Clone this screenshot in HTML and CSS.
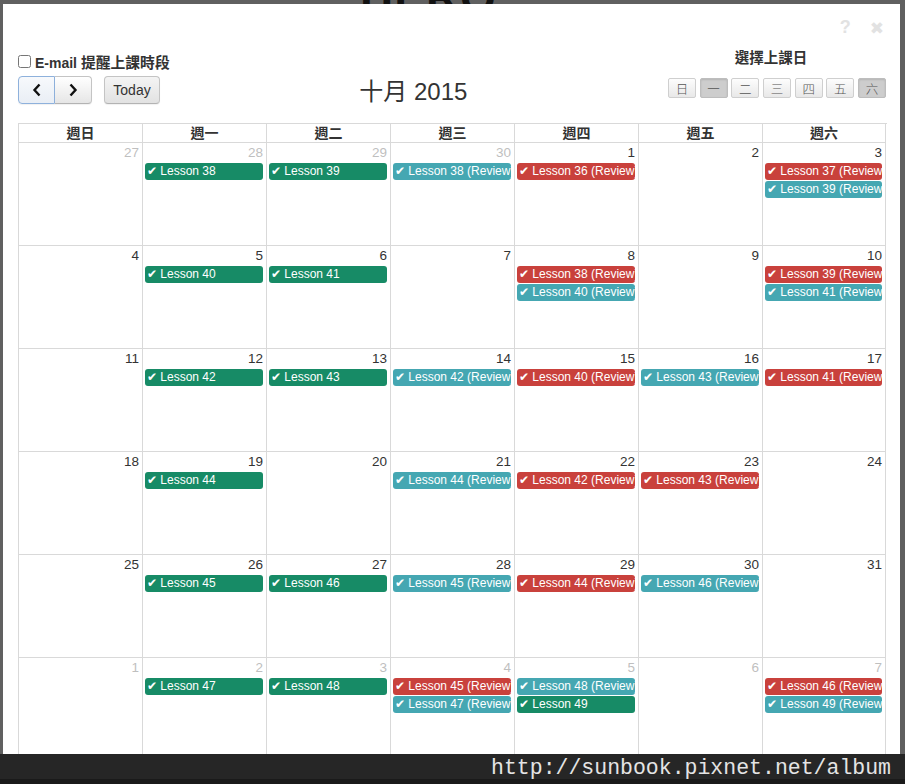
FILE: index.html
```html
<!DOCTYPE html>
<html lang="zh-Hant">
<head>
<meta charset="utf-8">
<title>選擇上課日</title>
<link rel="stylesheet" href="styles.css">
</head>
<body>
<div class="behind">HERO</div>
<div class="modal">
  <div class="modal-top">
    <span class="help">?</span>
    <span class="close">✖</span>
  </div>
  <div class="toolbar">
    <div class="tb-left">
      <label class="remind"><input type="checkbox" class="chk"><span>E-mail <span class="cjk">提醒上課時段</span></span></label>
      <div class="tb-buttons">
        <div class="btn-group">
          <button class="btn nav focus"><svg width="10" height="14" viewBox="0 0 10 14"><polyline points="7.5,1.5 2.5,7 7.5,12.5" fill="none" stroke="#111" stroke-width="2.4"/></svg></button>
          <button class="btn nav"><svg width="10" height="14" viewBox="0 0 10 14"><polyline points="2.5,1.5 7.5,7 2.5,12.5" fill="none" stroke="#111" stroke-width="2.4"/></svg></button>
        </div>
        <button class="btn today">Today</button>
      </div>
    </div>
    <div class="tb-title">十月 2015</div>
    <div class="tb-right">
      <div class="pick-label">選擇上課日</div>
      <div class="day-btns">
        <button class="dbtn">日</button>
        <button class="dbtn on">一</button>
        <button class="dbtn">二</button>
        <button class="dbtn">三</button>
        <button class="dbtn">四</button>
        <button class="dbtn">五</button>
        <button class="dbtn on">六</button>
      </div>
    </div>
  </div>

  <div class="cal">
    <div class="hd">週日</div><div class="hd">週一</div><div class="hd">週二</div><div class="hd">週三</div><div class="hd">週四</div><div class="hd">週五</div><div class="hd">週六</div>

    <div class="day other"><div class="num">27</div></div>
    <div class="day other"><div class="num">28</div><div class="ev g">✔ Lesson 38</div></div>
    <div class="day other"><div class="num">29</div><div class="ev g">✔ Lesson 39</div></div>
    <div class="day other"><div class="num">30</div><div class="ev t">✔ Lesson 38 (Review)</div></div>
    <div class="day"><div class="num">1</div><div class="ev r">✔ Lesson 36 (Review)</div></div>
    <div class="day"><div class="num">2</div></div>
    <div class="day"><div class="num">3</div><div class="ev r">✔ Lesson 37 (Review)</div><div class="ev t">✔ Lesson 39 (Review)</div></div>

    <div class="day"><div class="num">4</div></div>
    <div class="day"><div class="num">5</div><div class="ev g">✔ Lesson 40</div></div>
    <div class="day"><div class="num">6</div><div class="ev g">✔ Lesson 41</div></div>
    <div class="day"><div class="num">7</div></div>
    <div class="day"><div class="num">8</div><div class="ev r">✔ Lesson 38 (Review)</div><div class="ev t">✔ Lesson 40 (Review)</div></div>
    <div class="day"><div class="num">9</div></div>
    <div class="day"><div class="num">10</div><div class="ev r">✔ Lesson 39 (Review)</div><div class="ev t">✔ Lesson 41 (Review)</div></div>

    <div class="day"><div class="num">11</div></div>
    <div class="day"><div class="num">12</div><div class="ev g">✔ Lesson 42</div></div>
    <div class="day"><div class="num">13</div><div class="ev g">✔ Lesson 43</div></div>
    <div class="day"><div class="num">14</div><div class="ev t">✔ Lesson 42 (Review)</div></div>
    <div class="day"><div class="num">15</div><div class="ev r">✔ Lesson 40 (Review)</div></div>
    <div class="day"><div class="num">16</div><div class="ev t">✔ Lesson 43 (Review)</div></div>
    <div class="day"><div class="num">17</div><div class="ev r">✔ Lesson 41 (Review)</div></div>

    <div class="day"><div class="num">18</div></div>
    <div class="day"><div class="num">19</div><div class="ev g">✔ Lesson 44</div></div>
    <div class="day"><div class="num">20</div></div>
    <div class="day"><div class="num">21</div><div class="ev t">✔ Lesson 44 (Review)</div></div>
    <div class="day"><div class="num">22</div><div class="ev r">✔ Lesson 42 (Review)</div></div>
    <div class="day"><div class="num">23</div><div class="ev r">✔ Lesson 43 (Review)</div></div>
    <div class="day"><div class="num">24</div></div>

    <div class="day"><div class="num">25</div></div>
    <div class="day"><div class="num">26</div><div class="ev g">✔ Lesson 45</div></div>
    <div class="day"><div class="num">27</div><div class="ev g">✔ Lesson 46</div></div>
    <div class="day"><div class="num">28</div><div class="ev t">✔ Lesson 45 (Review)</div></div>
    <div class="day"><div class="num">29</div><div class="ev r">✔ Lesson 44 (Review)</div></div>
    <div class="day"><div class="num">30</div><div class="ev t">✔ Lesson 46 (Review)</div></div>
    <div class="day"><div class="num">31</div></div>

    <div class="day other"><div class="num">1</div></div>
    <div class="day other"><div class="num">2</div><div class="ev g">✔ Lesson 47</div></div>
    <div class="day other"><div class="num">3</div><div class="ev g">✔ Lesson 48</div></div>
    <div class="day other"><div class="num">4</div><div class="ev r">✔ Lesson 45 (Review)</div><div class="ev t">✔ Lesson 47 (Review)</div></div>
    <div class="day other"><div class="num">5</div><div class="ev t">✔ Lesson 48 (Review)</div><div class="ev g">✔ Lesson 49</div></div>
    <div class="day other"><div class="num">6</div></div>
    <div class="day other"><div class="num">7</div><div class="ev r">✔ Lesson 46 (Review)</div><div class="ev t">✔ Lesson 49 (Review)</div></div>
  </div>
</div>
<div class="watermark">http://sunbook.pixnet.net/album</div>
</body>
</html>
```

FILE: styles.css
```css
html, body {
  margin: 0;
  padding: 0;
  height: 784px;
  overflow: hidden;
}
body {
  background: #606060;
  font-family: "Liberation Sans", Arial, "Noto Sans CJK TC", sans-serif;
  color: #333;
  padding: 4px 0 0 3px;
  box-sizing: border-box;
  position: relative;
}
.behind {
  position: absolute;
  top: -30px;
  left: 360px;
  font: bold 46px "Liberation Sans", sans-serif;
  letter-spacing: 1px;
  color: #111;
  z-index: 0;
}
.modal {
  position: relative;
  z-index: 1;
  width: 897px;
  height: 800px;
  background: #fff;
  padding: 0 14px 0 15px;
  box-sizing: border-box;
}
.modal-top {
  height: 45px;
  display: flex;
  justify-content: flex-end;
  align-items: center;
  gap: 19px;
  padding-right: 2px;
  padding-top: 2px;
  box-sizing: border-box;
}
.help {
  font: bold 18px "Liberation Sans", sans-serif;
  color: #e2e2e2;
}
.close {
  font: 17px "DejaVu Sans", sans-serif;
  color: #e2e2e2;
}
.toolbar {
  display: flex;
  align-items: flex-start;
  height: 55px;
}
.tb-left {
  display: flex;
  flex-direction: column;
  padding-top: 2px;
}
.remind {
  display: flex;
  align-items: center;
  height: 20px;
  font-weight: bold;
  font-size: 14px;
  color: #333;
}
.cjk {
  font-size: 14.8px;
}
.chk {
  width: 13px;
  height: 13px;
  margin: 0 4px 0 0;
}
.tb-buttons {
  display: flex;
  gap: 12px;
  margin-top: 5px;
}
.btn-group {
  display: flex;
}
.btn {
  height: 28px;
  border: 1px solid #c4c4c4;
  border-bottom-color: #b3b3b3;
  background: linear-gradient(#ffffff, #e6e6e6);
  font-family: "Liberation Sans", sans-serif;
  font-size: 14px;
  color: #333;
  padding: 0;
  margin: 0;
  display: flex;
  align-items: center;
  justify-content: center;
  border-radius: 4px;
  box-shadow: 0 1px 1px rgba(0,0,0,0.06);
}
.nav {
  width: 37px;
}
.btn-group .nav:first-child {
  border-radius: 4px 0 0 4px;
}
.btn-group .nav:last-child {
  border-radius: 0 4px 4px 0;
  border-left: none;
}
.nav.focus {
  background: linear-gradient(#f7f9fc, #e9eef5);
  border-color: #8eb1dc;
}
.today {
  width: 56px;
  background: linear-gradient(#f4f4f4, #e2e2e2);
}
.tb-title {
  flex: 1;
  text-align: center;
  font-size: 24px;
  line-height: 24px;
  margin-top: 31px;
  padding-right: 11px;
  color: #333;
  font-family: "Liberation Sans", "Noto Sans CJK TC", sans-serif;
}
.tb-right {
  display: flex;
  flex-direction: column;
  align-items: center;
  width: 218px;
}
.pick-label {
  font-weight: bold;
  font-size: 14.5px;
  line-height: 18px;
  color: #333;
  padding-right: 12px;
}
.day-btns {
  display: flex;
  gap: 3.7px;
  margin-top: 11px;
}
.dbtn {
  width: 28px;
  height: 20px;
  border: 1px solid #cfcfcf;
  border-radius: 2px;
  background: linear-gradient(#fdfdfd, #e8e8e8);
  font-family: "Noto Sans CJK TC", sans-serif;
  font-weight: 300;
  font-size: 12.5px;
  color: #555;
  padding: 0;
  display: flex;
  align-items: center;
  justify-content: center;
}
.dbtn.on {
  background: #cdcdcd;
  border-color: #bdbdbd;
  box-shadow: inset 0 1px 2px rgba(0,0,0,0.12);
}
.cal {
  margin-top: 19px;
  width: 868px;
  border-left: 1px solid #d9d9d9;
  border-top: 1px solid #d9d9d9;
  display: grid;
  grid-template-columns: repeat(6, 124px) 123px;
  grid-template-rows: 19px;
  grid-auto-rows: 103px;
}
.hd {
  border-right: 1px solid #d9d9d9;
  border-bottom: 1px solid #d9d9d9;
  text-align: center;
  font-weight: bold;
  font-size: 14px;
  line-height: 18px;
  color: #333;
}
.day {
  border-right: 1px solid #d9d9d9;
  border-bottom: 1px solid #d9d9d9;
  min-width: 0;
  display: flex;
  flex-direction: column;
}
.num {
  height: 20px;
  line-height: 19px;
  font-size: 13.5px;
  text-align: right;
  padding-right: 3px;
  color: #333;
}
.other .num {
  color: #bfbfbf;
}
.ev {
  height: 17px;
  line-height: 17px;
  margin: 0 3px 1px 2px;
  padding-left: 2px;
  border-radius: 3px;
  color: #fff;
  font-size: 12px;
  white-space: nowrap;
  overflow: hidden;
}
.ev.g { background: #178b66; }
.ev.t { background: #45a7b2; }
.ev.r { background: #c9413c; }
.watermark {
  position: absolute;
  left: 0;
  right: 0;
  top: 754px;
  height: 30px;
  background: #262626;
  border-bottom: 5px solid #1a1a1a;
  box-sizing: border-box;
  text-align: right;
  padding-right: 14px;
  font-family: "Liberation Mono", monospace;
  font-size: 21.5px;
  line-height: 28px;
  color: #e4e4e4;
  z-index: 2;
}
```
